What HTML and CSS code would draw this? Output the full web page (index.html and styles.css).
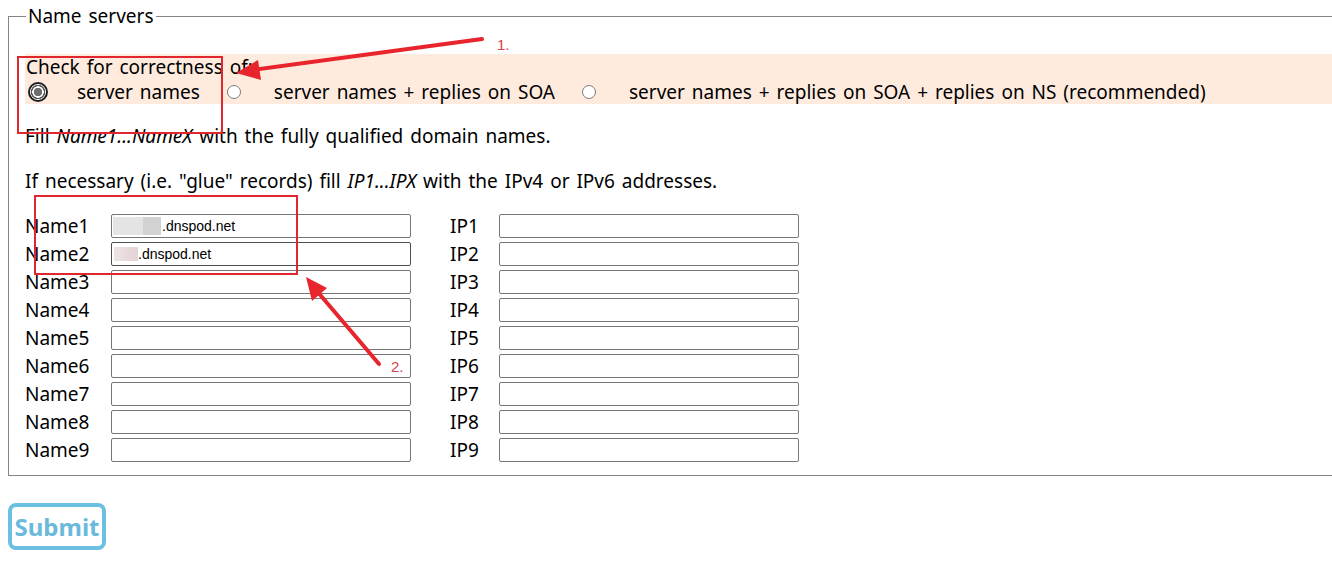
FILE: index.html
```html
<!DOCTYPE html>
<html lang="en">
<head>
    <meta charset="UTF-8">
    <meta name="viewport" content="width=device-width, initial-scale=1.0">
    <title>Name servers</title>
    <link rel="stylesheet" href="styles.css">
</head>
<body>
    <form class="page">
        <fieldset class="ns">
            <legend>Name servers</legend>
            <div class="check">
                <div class="check-title">Check for correctness of:</div>
                <div class="check-opts">
                    <input type="radio" name="check" id="c1" class="radio big" checked>
                    <label for="c1" class="opt">server names</label>
                    <input type="radio" name="check" id="c2" class="radio">
                    <label for="c2" class="opt">server names + replies on SOA</label>
                    <input type="radio" name="check" id="c3" class="radio">
                    <label for="c3" class="opt">server names + replies on SOA + replies on NS (recommended)</label>
                </div>
            </div>
            <p class="hint">Fill <i>Name1...NameX</i> with the fully qualified domain names.</p>
            <p class="hint">If necessary (i.e. "glue" records) fill <i>IP1...IPX</i> with the IPv4 or IPv6 addresses.</p>

            <div class="servers">
                <label class="nm">Name1</label><input type="text" class="field blur1" value=".dnspod.net">
                <label class="ip">IP1</label><input type="text" class="field">
                <label class="nm">Name2</label><input type="text" class="field blur2 hover" value=".dnspod.net">
                <label class="ip">IP2</label><input type="text" class="field">
                <label class="nm">Name3</label><input type="text" class="field">
                <label class="ip">IP3</label><input type="text" class="field">
                <label class="nm">Name4</label><input type="text" class="field">
                <label class="ip">IP4</label><input type="text" class="field">
                <label class="nm">Name5</label><input type="text" class="field">
                <label class="ip">IP5</label><input type="text" class="field">
                <label class="nm">Name6</label><input type="text" class="field">
                <label class="ip">IP6</label><input type="text" class="field">
                <label class="nm">Name7</label><input type="text" class="field">
                <label class="ip">IP7</label><input type="text" class="field">
                <label class="nm">Name8</label><input type="text" class="field">
                <label class="ip">IP8</label><input type="text" class="field">
                <label class="nm">Name9</label><input type="text" class="field">
                <label class="ip">IP9</label><input type="text" class="field">
            </div>
        </fieldset>
        <button type="button" class="submit">Submit</button>
    </form>

    <!-- annotations drawn over the screenshot -->
    <svg class="marks" width="1332" height="572" viewBox="0 0 1332 572">
        <rect x="18" y="57" width="204" height="76" fill="none" stroke="#e0262e" stroke-width="2"/>
        <rect x="35" y="196" width="262" height="78" fill="none" stroke="#e0262e" stroke-width="2"/>
        <line x1="482" y1="39" x2="252" y2="70" stroke="#e8242c" stroke-width="4" stroke-linecap="round"/>
        <polygon points="236,73 258,60 261,80" fill="#e8242c"/>
        <text x="497" y="50" class="mark-num">1.</text>
        <line x1="379" y1="364" x2="316" y2="290" stroke="#e8242c" stroke-width="4" stroke-linecap="round"/>
        <polygon points="306,277 327,288 312,301" fill="#e8242c"/>
        <text x="391" y="372" class="mark-num">2.</text>
    </svg>
</body>
</html>
```

FILE: styles.css
```css
body {
    margin: 4px 0 4px 8px;
    font-family: "Noto Sans", "Open Sans", sans-serif;
    font-size: 19px;
    word-spacing: 2px;
    color: #000000;
    background: #ffffff;
    overflow: hidden;
}
.ns {
    margin: 0;
    padding: 26px 0 13px 16px;
    border: 1px solid #858585;
    border-right: none;
    min-width: 0;
}
.ns legend {
    padding: 0 2px;
    margin-left: 1px;
    line-height: 24px;
}
.check {
    background-color: #feebde;
    line-height: 25px;
}
.check-title {
    padding-left: 1px;
    padding-top: 1px;
    height: 24px;
}
.check-opts {
    display: flex;
    align-items: center;
    height: 25px;
    padding-top: 1px;
    box-sizing: border-box;
}
.radio {
    appearance: none;
    margin: 0;
    width: 14px;
    height: 14px;
    border: 1px solid #7a7a7a;
    border-radius: 50%;
    background: #ffffff;
    flex-shrink: 0;
}
.radio.big {
    width: 20px;
    height: 20px;
    margin-left: 3px;
    border: 2px solid #1e1e1e;
    background: radial-gradient(circle, #6e6e6e 0 4px, #ffffff 4.5px 5.5px, #5a5a5a 6px 7px, #ffffff 7.5px);
}
.opt {
    margin-left: 33px;
    margin-right: 27px;
}
.radio.big + .opt {
    margin-left: 29px;
}
.hint {
    margin: 20px 0 0;
    line-height: 25px;
}
.servers {
    display: grid;
    grid-template-columns: 86px 300px 88px 300px;
    grid-auto-rows: 24px;
    row-gap: 4px;
    margin-top: 20px;
    align-items: center;
    word-spacing: normal;
}
.servers label {
    line-height: 24px;
}
.servers .ip {
    padding-left: 39px;
}
.field {
    box-sizing: border-box;
    height: 24px;
    width: 300px;
    margin: 0;
    padding: 1px 2px;
    border: 1px solid #767676;
    border-radius: 2px;
    font-family: "Liberation Sans", Arial, sans-serif;
    font-size: 14px;
    color: #000000;
    background-color: #ffffff;
}
.field.hover {
    border-color: #4f4f4f;
}
.blur1 {
    padding-left: 50px;
    background-image: linear-gradient(to right, #e4e4e4 0 30px, #d2d2d2 30px 48px);
    background-size: 48px 18px;
    background-position: 1px center;
    background-repeat: no-repeat;
}
.blur2 {
    padding-left: 26px;
    background-image: linear-gradient(to right, #eee3e3, #e3d3d5);
    background-size: 24px 14px;
    background-position: 2px center;
    background-repeat: no-repeat;
}
.submit {
    margin-top: 27px;
    width: 98px;
    height: 47px;
    padding: 0;
    border: 4px solid #6bbfe0;
    border-radius: 8px;
    background: #ffffff;
    color: #6bb9dc;
    font-family: "Noto Sans", "Open Sans", sans-serif;
    font-weight: bold;
    font-size: 24px;
    word-spacing: normal;
    cursor: pointer;
}
.marks {
    position: absolute;
    top: 0;
    left: 0;
    pointer-events: none;
}
.mark-num {
    font-family: "Liberation Sans", Arial, sans-serif;
    font-size: 15px;
    fill: #d8404a;
}
```
